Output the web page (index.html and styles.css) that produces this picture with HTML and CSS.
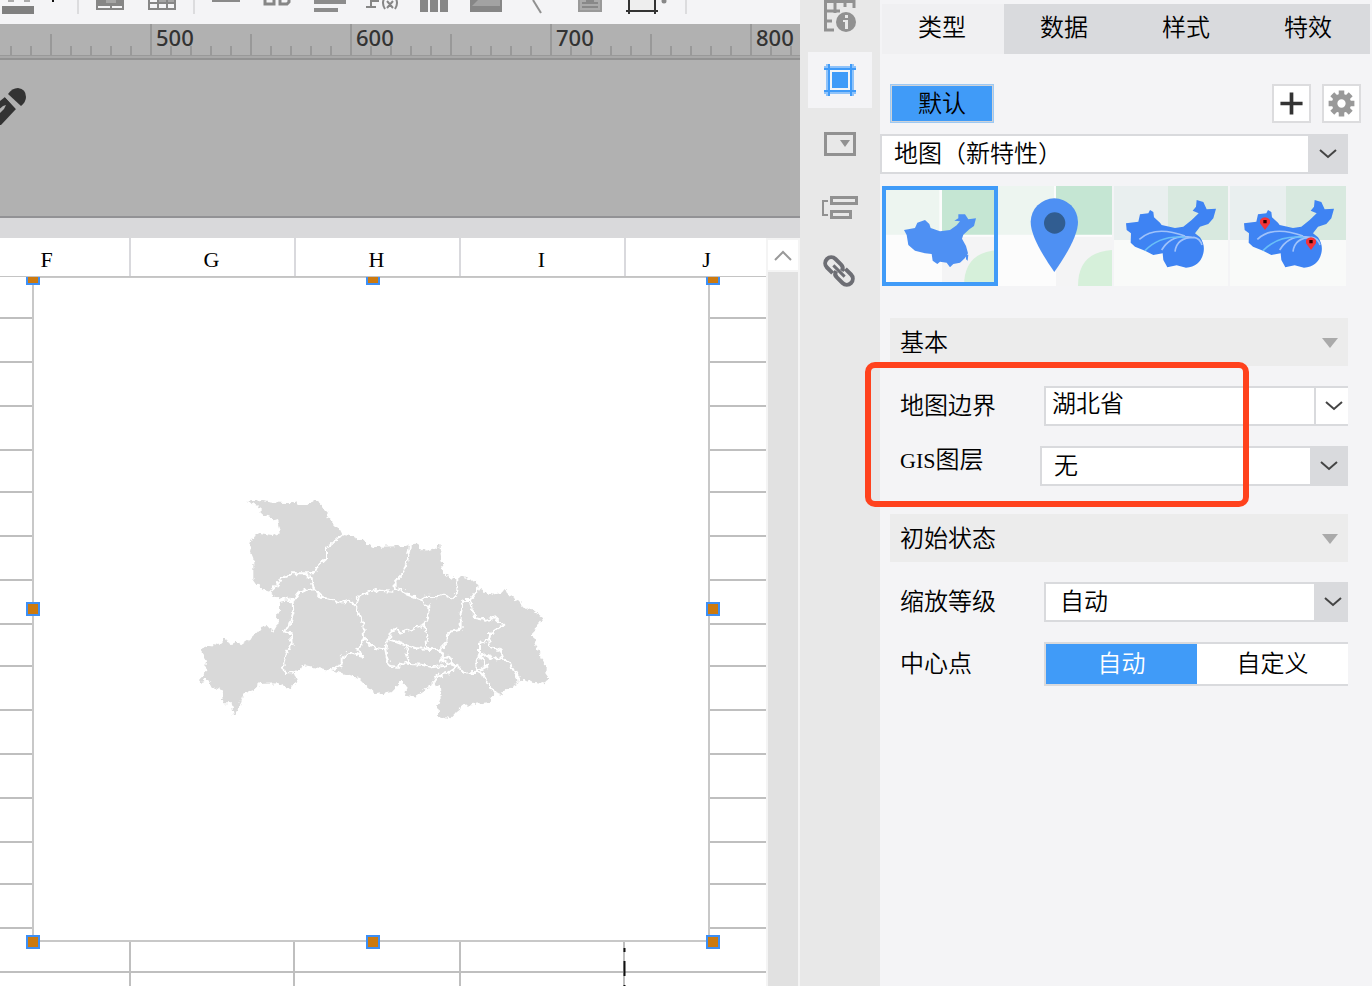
FILE: index.html
```html
<!DOCTYPE html>
<html lang="zh-CN">
<head>
<meta charset="utf-8">
<title>地图设计器</title>
<link rel="stylesheet" href="styles.css">
</head>
<body>
<div class="app">
  <main class="workspace">
    <div class="toolbar" role="toolbar" aria-label="工具栏">
      <button class="tool tool-first" aria-label="颜色"><svg viewBox="0 0 77 24"><path d="M2 6h32v8H2z" fill="#808080"/><path d="M8 0h6v2H8zM24 0h6v2h-6z" fill="#aaa"/><path d="M52 0h2v2h-2z" fill="#111"/></svg></button>
      <span class="divider"></span>
      <button class="tool" aria-label="合并单元格"><svg viewBox="84 0 52 24"><path d="M96 0h28v10H96z" fill="#868686"/><path d="M98 6h12v2H98zM112 6h10v2h-10z" fill="#f4f4f6"/><path d="M106 0h10v3h-10z" fill="#a5a5a5"/></svg></button>
      <button class="tool" aria-label="拆分单元格"><svg viewBox="136 0 52 24"><path d="M148 0h28v10h-28z" fill="#868686"/><path d="M150 4h7v4h-7zM159 4h7v4h-7zM168 4h6v4h-6zM150 0h7v2h-7z" fill="#f4f4f6"/><path d="M159 0h7v2h-7zM168 0h6v2h-6z" fill="#a5a5a5"/></svg></button>
      <span class="divider"></span>
      <button class="tool" aria-label="线条"><svg viewBox="200 0 52 24"><path d="M212 0h28v2h-28z" fill="#8a8a8a"/></svg></button>
      <button class="tool" aria-label="文本"><svg viewBox="252 0 52 24"><path d="M265 0v4h9V0M280 0v4h7l2-2V0" fill="none" stroke="#868686" stroke-width="3"/></svg></button>
      <button class="tool" aria-label="富文本"><svg viewBox="304 0 52 24"><path d="M314 0h32v4h-32zM314 8h24v4h-24z" fill="#8c8c8c"/></svg></button>
      <button class="tool" aria-label="公式"><svg viewBox="356 0 52 24"><path d="M366 7h10M371 7V-3M371 1h7V-1M385-3q-4 6 0 12M387 1l6 7M393 1l-6 7M395-3q4 6 0 12" fill="none" stroke="#868686" stroke-width="2"/></svg></button>
      <button class="tool" aria-label="图表"><svg viewBox="408 0 52 24"><path d="M420 0h8v12h-8zM430 0h8v12h-8zM440 0h8v12h-8z" fill="#868686"/></svg></button>
      <button class="tool" aria-label="图片"><svg viewBox="460 0 52 24"><path d="M470 0h32v12h-32z" fill="#868686"/><path d="M472 6l6-6h22v6z" fill="#a2a2a2"/></svg></button>
      <button class="tool" aria-label="斜线"><svg viewBox="512 0 52 24"><path d="M533 0l8 13" fill="none" stroke="#909090" stroke-width="2"/></svg></button>
      <button class="tool" aria-label="子报表"><svg viewBox="564 0 52 24"><path d="M578 0h24v12h-24z" fill="#999"/><path d="M580 0h20v10h-20z" fill="#aaa"/><path d="M582 3h16M582 7h16" stroke="#888" stroke-width="2"/><path d="M586 0h8v3h-8z" fill="#888"/></svg></button>
      <button class="tool" aria-label="悬浮元素"><svg viewBox="616 0 52 24"><path d="M630 0h24v10h-24z" fill="#eee"/><path d="M629 0v14M655 0v14M626 11h32" fill="none" stroke="#333" stroke-width="2"/><circle cx="664" cy="1" r="2.5" fill="#888"/></svg></button>
      <span class="divider divider-last"></span>
    </div>

    <div class="ruler">
      <div class="ruler-part"></div>
      <div class="ruler-part">500</div>
      <div class="ruler-part">600</div>
      <div class="ruler-part">700</div>
      <div class="ruler-part">800</div>
    </div>

    <div class="param-pane">
      <svg class="pencil" viewBox="0 0 30 40" aria-hidden="true"><path d="M-4 14L5 7l11 12L1 35h-5z" fill="#333"/><path d="M-4 27l8-8 2-4-3 1-7 6z" fill="#b1b1b1"/><path d="M6 6l13 14" stroke="#b1b1b1" stroke-width="3"/><path d="M8 4q4-6 10-6 8 1 8 9 0 5-5 9z" fill="#333"/></svg>
    </div>
    <div class="band"></div>

    <div class="sheet">
      <div class="sheet-main">
        <div class="columns"><span>F</span><span>G</span><span>H</span><span>I</span><span>J</span></div>
        <div class="canvas">
          <svg class="gridlines" width="2000" height="1400" aria-hidden="true">
            <path d="M0 41h2000M0 85h2000M0 129h2000M0 173h2000M0 215h2000M0 259h2000M0 303h2000M0 347h2000M0 389h2000M0 433h2000M0 477h2000M0 521h2000M0 565h2000M0 607h2000M0 651h2000M0 695h2000" stroke="#bfbfbf" stroke-width="2"/>
            <path d="M130 0v1400M294 0v1400M460 0v1400M624 0v1400" stroke="#bfbfbf" stroke-width="2"/>
            <path d="M624.500 671v4M624.500 684v15M624.500 708v15" stroke="#111" stroke-width="2"/>
          </svg>
          <div class="chart">
            <svg class="province" viewBox="0 0 1140 720" role="img" aria-label="湖北省">
              <defs><filter id="coast" x="0" y="0" width="1" height="1" color-interpolation-filters="sRGB"><feTurbulence type="fractalNoise" baseFrequency="0.07" numOctaves="2" seed="4"/><feDisplacementMap in="SourceGraphic" scale="20" xChannelSelector="R" yChannelSelector="G"/></filter></defs>
              <g filter="url(#coast)">
                <path fill="#d9d9d9" d="M170 36L215 30 270 38 308 40 318 32 328 48 352 44 375 30 392 42 408 66 415 86 445 115 455 135 480 137 520 155 550 172 570 170 645 168 680 164 705 184 735 174 748 164 754 210 760 250 795 270 808 256 860 276 868 296 905 314 935 308 945 296 953 314 985 334 1010 360 1020 355 1040 370 1060 385 1040 410 1028 434 1042 470 1052 500 1068 520 1066 550 1078 566 1055 582 1030 578 985 566 985 580 940 604 938 616 915 608 900 636 870 640 825 644 800 664 778 688 745 678 742 650 752 620 750 592 730 582 670 622 645 618 650 585 635 572 605 604 560 612 525 585 505 565 480 555 420 540 345 526 310 545 322 578 290 596 265 580 210 582 190 600 160 612 150 648 132 676 125 640 100 640 95 600 65 590 50 560 35 582 27 570 45 550 48 510 27 478 60 465 85 468 107 445 118 465 145 458 150 468 190 440 215 410 235 408 250 425 262 405 265 372 270 330 240 306 212 296 190 265 190 205 178 175 185 145 205 132 250 138 270 130 262 95 240 80 215 74 215 52Z"/>
                <g fill="none" stroke="#fff" stroke-width="6" stroke-linejoin="round">
                  <path d="M458 132L430 158 408 175 408 205 380 232 375 250 345 250 310 250 275 265 262 285 238 308"/>
                  <path d="M345 250L365 270 372 298 345 300 325 310 308 335 290 325 268 330"/>
                  <path d="M372 298L390 318 430 330 450 338 480 332 500 350 508 375 520 400 522 440 505 480 520 500 475 488 455 505 455 525 418 542"/>
                  <path d="M308 335L310 370 300 400 285 425 303 430 305 460 290 485 280 520 285 550 300 550 312 545"/>
                  <path d="M495 345L505 320 530 310 555 300 580 303 613 305M660 164L652 215 640 248 613 275 615 300 630 298 650 312 692 328 705 320 740 322 760 314 785 325 802 308 802 258"/>
                  <path d="M692 328L715 350 715 380 702 402 665 418 630 430 620 415 602 425 600 448 590 458 586 478 560 475 540 465 522 440"/>
                  <path d="M586 478L590 500 600 528 622 530 635 520 700 525 725 532 760 528 795 520"/>
                  <path d="M600 448L640 462 680 475 720 477 750 478 772 455 775 425 812 420 812 370 820 330 840 330 868 292"/>
                  <path d="M702 402L708 430 712 477M648 462L650 490 658 522"/>
                  <path d="M840 330L845 355 858 385 890 392 915 382 940 405 900 430 898 450 870 458 870 490 858 520 862 545"/>
                  <path d="M898 450L900 475 930 480 940 505 920 508 890 495 870 500 890 530 862 545M940 505L960 520 975 545 988 568"/>
                  <path d="M750 478L760 500 750 512 775 500 785 515 805 530 820 548 862 545 885 560 900 590 918 612M755 512L800 530 770 550 740 560 726 584"/>
                </g>
              </g>
            </svg>
            <i class="handle nw"></i><i class="handle n"></i><i class="handle ne"></i><i class="handle w"></i><i class="handle e"></i><i class="handle sw"></i><i class="handle s"></i><i class="handle se"></i>
          </div>
        </div>
      </div>
      <div class="scrollbar"><button class="scroll-up" aria-label="向上滚动"><svg viewBox="0 0 30 30"><path d="M7 20l8-8 8 8" fill="none" stroke="#999" stroke-width="2"/></svg></button></div>
    </div>
  </main>

  <nav class="rail" aria-label="属性面板">
    <button class="rail-item" aria-label="单元格属性"><svg viewBox="0 0 40 40"><g fill="none" stroke="#919191" stroke-width="3"><path d="M5.500 4v30H14M4 5.500h30V12M5 15h15M5 25h7M15 5v12M25 5v6" /></g><circle cx="26" cy="26" r="10" fill="#919191"/><path d="M25 19h3v3h-3zM23 24h5v9h-3v-7h-2z" fill="#e8e8e8"/></svg></button>
    <button class="rail-item active" aria-label="悬浮元素"><svg viewBox="0 0 40 40"><g fill="none" stroke="#8fc3fa" stroke-width="4"><path d="M4 8h32M4 32h32M8 4v32M32 4v32"/></g><path d="M9 4v32M31 4v32M4 9h32M4 31h32" stroke="#409bf8" stroke-width="2"/><path d="M12 12h16v16H12z" fill="#409bf8"/></svg></button>
    <button class="rail-item" aria-label="控件设置"><svg viewBox="0 0 40 40"><path d="M5.500 9.500h29v21h-29z" fill="none" stroke="#919191" stroke-width="3"/><path d="M20 16h10l-5 7z" fill="#919191"/></svg></button>
    <button class="rail-item" aria-label="条件属性"><svg viewBox="0 0 40 40"><g fill="none" stroke="#919191" stroke-width="3"><path d="M11.500 9.500h25v6h-25zM11.500 23.500h19v6h-19z"/><path d="M8 13H3v14h5" stroke-width="2"/></g></svg></button>
    <button class="rail-item" aria-label="超级链接"><svg viewBox="0 0 40 40"><g fill="none" stroke="#6d6e74" stroke-width="4" transform="translate(19 19) rotate(45)"><path d="M-3 6h-8a5 5 0 0 1 0-12h8a5 5 0 0 1 5 4M3-6h8a5 5 0 0 1 0 12H3a5 5 0 0 1-5-4"/><path d="M-8 0H8" stroke-width="3"/></g></svg></button>
  </nav>

  <aside class="panel">
    <div class="tabs" role="tablist">
      <button class="tab current" role="tab" aria-selected="true">类型</button>
      <button class="tab" role="tab">数据</button>
      <button class="tab" role="tab">样式</button>
      <button class="tab" role="tab">特效</button>
    </div>
    <div class="actions">
      <button class="default-button">默认</button>
      <button class="icon-button" aria-label="添加"><svg viewBox="0 0 38 38"><path d="M19 7v24M7 19h24" stroke="#333" stroke-width="4"/></svg></button>
      <button class="icon-button" aria-label="设置"><svg viewBox="0 0 38 38"><g stroke="#999" stroke-width="6"><path d="M19 5v28M5 19h28M9 9l20 20M29 9L9 29"/></g><circle cx="19" cy="19" r="7.500" fill="#fff" stroke="#999" stroke-width="6"/></svg></button>
    </div>
    <div class="select-box type-select">
      <select aria-label="图表类型"><option>地图（新特性）</option></select>
      <span class="arrow"><svg viewBox="0 0 18 12"><path d="M1 2l8 7 8-7" fill="none" stroke="#444" stroke-width="2"/></svg></span>
    </div>
    <div class="thumbs">
      <button class="thumb chosen" aria-label="区域地图"><svg viewBox="246 558 348 300" preserveAspectRatio="none"><path fill="#fcfcfc" d="M246 558h348v300H246z"/><path fill="#edf5f0" d="M246 558h172v146H246z"/><path fill="#c5e6d3" d="M426 558h168v146H426z"/><path fill="#f4f4f5" d="M426 710h168v148H426z"/><path fill="#d6f0da" d="M492 858q0-102 102-108v108z"/><path fill="#4e90f3" d="M312 690L345 684 352 668 375 660 388 672 392 684 420 694 450 690 470 676 480 664 463 662 475 655 475 643 495 643 505 658 528 655 522 678 508 688 490 704 486 716 498 738 504 760 495 774 480 788 460 792 450 802 440 788 420 785 412 792 398 782 395 762 375 760 345 752 325 735 320 705Z"/><path fill="#4e90f3" d="M498 764h7l-2 18-5-4z"/></svg></button>
      <button class="thumb" aria-label="点地图"><svg viewBox="594 558 342 300" preserveAspectRatio="none"><path fill="#fcfcfc" d="M594 558h342v300H594z"/><path fill="#edf5f0" d="M594 558h168v146H594z"/><path fill="#c5e6d3" d="M768 558h168v146H768z"/><path fill="#f4f4f5" d="M768 710h168v148H768z"/><path fill="#d6f0da" d="M834 858q0-102 102-108v108z"/><path fill="#4e90f3" d="M763 816Q692 715 692 666a71 71 0 0 1 142 0Q834 715 763 816z"/><circle cx="764" cy="669" r="32" fill="#315d91"/></svg></button>
      <button class="thumb" aria-label="流向地图"><svg viewBox="102 558 342 300" preserveAspectRatio="none"><path fill="#f9faf9" d="M102 558h342v300H102z"/><path fill="#e9efef" d="M102 558h162v162H102z"/><path fill="#d8e9df" d="M264 558h180v162H264z"/><g id="flow"><path fill="#3e83f3" d="M138 670L175 665 180 643 205 640 210 630 220 636 222 652 240 668 245 675 285 684 310 680 335 660 356 640 338 632 348 620 350 600 370 606 380 628 408 626 400 655 385 672 360 680 345 700 360 712Q376 735 370 760 360 800 318 803L290 796 262 802 250 780 248 760 220 765 195 752 165 740 152 728 153 700 140 690Z"/><g fill="none" stroke="#9fc2fa" stroke-width="5"><path d="M178 718Q225 675 315 708M245 750Q275 700 335 712M285 755Q290 712 342 712 360 715 366 735"/><path d="M195 752Q240 705 315 712" stroke="#69bff7"/></g></g></svg></button>
      <button class="thumb" aria-label="自定义地图"><svg viewBox="450 558 348 300" preserveAspectRatio="none"><path fill="#f9faf9" d="M450 558h348v300H450z"/><path fill="#e9efef" d="M450 558h168v162H450z"/><path fill="#d8e9df" d="M618 558h180v162H618z"/><use href="#flow" x="354"/><g fill="#f5343a"><path d="M555 690l-15-20v-10q5-8 15-8t15 8v10zM693 750l-15-20v-10q5-8 15-8t15 8v10z"/><path fill="#300" d="M550 660h10v10h-10zM688 720h10v10h-10z"/></g></svg></button>
    </div>

    <section class="group">
      <h2 class="group-title">基本<svg viewBox="0 0 16 10"><path d="M0 0h16L8 10z" fill="#aaa"/></svg></h2>
      <div class="field">
        <label for="border">地图边界</label>
        <div class="combo"><input id="border" type="text" value="湖北省"><button class="arrow plain" aria-label="选择边界"><svg viewBox="0 0 18 12"><path d="M1 2l8 7 8-7" fill="none" stroke="#444" stroke-width="2"/></svg></button></div>
      </div>
      <div class="field gis">
        <label for="layer"><span class="latin">GIS</span>图层</label>
        <div class="select-box"><select id="layer"><option>无</option></select><span class="arrow medium"><svg viewBox="0 0 18 12"><path d="M1 2l8 7 8-7" fill="none" stroke="#444" stroke-width="2"/></svg></span></div>
      </div>
      <div class="highlight"></div>
    </section>

    <section class="group second">
      <h2 class="group-title">初始状态<svg viewBox="0 0 16 10"><path d="M0 0h16L8 10z" fill="#aaa"/></svg></h2>
      <div class="field">
        <label for="zoom">缩放等级</label>
        <div class="select-box"><select id="zoom"><option>自动</option></select><span class="arrow narrow"><svg viewBox="0 0 18 12"><path d="M1 2l8 7 8-7" fill="none" stroke="#444" stroke-width="2"/></svg></span></div>
      </div>
      <div class="field">
        <span class="label" id="center">中心点</span>
        <div class="segmented" role="group" aria-labelledby="center"><button class="on">自动</button><button>自定义</button></div>
      </div>
    </section>
  </aside>
</div>
</body>
</html>
```

FILE: styles.css
```css
* { box-sizing: border-box; }
body {
  margin: 0;
  background: #f4f4f6;
  color: #000;
  font: 350 24px/32px "Liberation Serif", "Noto Sans CJK SC", serif;
}
button, input, select {
  margin: 0;
  padding: 0;
  border: 0;
  border-radius: 0;
  background: none;
  color: inherit;
  font: inherit;
}
svg { display: block; }
.app {
  display: grid;
  grid-template-columns: minmax(0, 1fr) 80px 492px;
  height: 100vh;
  overflow: hidden;
}
.workspace { display: flex; flex-direction: column; min-height: 0; }

.toolbar { display: flex; flex: none; height: 24px; overflow: hidden; }
.tool { flex: none; width: 52px; height: 24px; overflow: hidden; }
.tool svg { width: 100%; height: 24px; overflow: visible; }
.tool-first { width: 77px; }
.divider { flex: none; width: 2px; height: 14px; margin: 0 5px; background: #dcdcde; }
.tool-first + .divider { margin: 0 5px 0 0; }
.divider-last { margin-left: 17px; }

.ruler {
  display: flex;
  flex: none;
  height: 36px;
  overflow: hidden;
  border-bottom: 2px solid #929292;
  background: #b1b1b1;
  box-shadow: inset 0 -2px #a8a8a8;
}
.ruler-part {
  flex: none;
  width: 200px;
  height: 32px;
  padding-left: 6px;
  border-bottom: 1px solid #999;
  background:
    linear-gradient(#999, #999) 0 0 / 2px 32px no-repeat,
    linear-gradient(#999, #999) 100px 10px / 2px 22px no-repeat,
    repeating-linear-gradient(90deg, #999 0 2px, transparent 2px 20px) 0 22px / 200px 10px no-repeat;
  color: #333;
  font: 500 22px/26px "Noto Sans", sans-serif;
}
.ruler-part:first-child { margin-left: -50px; }
.param-pane { flex: none; height: 158px; padding-top: 30px; border-bottom: 2px solid #929295; background: #b1b1b1; }
.pencil { width: 30px; height: 40px; overflow: visible; }
.band { flex: none; height: 20px; background: #d9d9db; }

.sheet { display: flex; flex: 1; min-height: 0; }
.sheet-main { display: flex; flex: 1; flex-direction: column; min-width: 0; background: #fff; }
.columns { display: flex; flex: none; height: 39px; overflow: hidden; border-bottom: 1px solid #c4c4c4; }
.columns span {
  flex: none;
  width: 165px;
  padding-right: 2px;
  border-right: 2px solid #d9d9dd;
  font-size: 22px;
  line-height: 44px;
  text-align: center;
}
.columns span:first-child { margin-left: -34px; }
.canvas { position: relative; flex: 1; overflow: hidden; }
.gridlines { position: absolute; top: 0; left: 0; }
.chart {
  position: absolute;
  top: -1px;
  left: 32px;
  width: 678px;
  height: 666px;
  border: 2px solid #c8c8c8;
  background: #fff;
}
.province { position: absolute; top: 212px; left: 156px; width: 380px; height: 240px; }
.handle { position: absolute; width: 14px; height: 14px; border: 2px solid #3d8ff5; background: #cc7a10; }
.nw, .n, .ne { top: -7px; }
.w, .e { top: 324px; }
.sw, .s, .se { bottom: -9px; }
.nw, .w, .sw { left: -8px; }
.n, .s { left: 332px; }
.ne, .e, .se { right: -12px; }

.scrollbar { flex: none; width: 34px; padding-top: 2px; border: solid #f4f4f4; border-width: 0 2px; background: linear-gradient(#f4f4f4 34px, #e1e1e1 34px); }
.scroll-up { display: block; width: 30px; height: 30px; background: #fff; }

.rail { display: flex; flex-direction: column; gap: 8px; padding: 0 8px; background: #e8e8e8; }
.rail-item { display: flex; flex: none; align-items: center; justify-content: center; height: 56px; }
.rail-item:first-child { height: 44px; padding-bottom: 12px; }
.rail-item svg { flex: none; width: 40px; height: 40px; }
.rail-item.active { background: #f4f4f6; }

.panel { padding: 4px 24px 0 0; }
.tabs { display: flex; margin: 0 -22px 0 2px; }
.tab { flex: 1; height: 50px; padding: 0 2px 2px 0; background: #d9dadd; }
.tab.current { background: #f0f0f2; }
.actions { display: flex; gap: 11px; margin: 30px -13px 11px 10px; }
.default-button { width: 104px; height: 39px; margin-right: auto; border: 2px solid #cfd3d8; background: #409bf8; line-height: 34px; outline: 1px solid #9cc9f5; outline-offset: -1px; }
.icon-button { width: 39px; height: 39px; border: 2px solid #dcdcde; background: #fff; }
.icon-button svg { width: 100%; }

.select-box, .combo { display: flex; flex: 1; min-width: 0; height: 40px; border: 2px solid #d9dadd; border-right: 0; background: #fff; }
.type-select { margin-bottom: 12px; }
select { flex: 1; min-width: 0; padding-left: 12px; appearance: none; }
.combo input { flex: 1; min-width: 0; padding: 0 0 4px 6px; outline: 0; }
.arrow { display: flex; flex: none; align-items: center; justify-content: center; width: 40px; margin: -2px 0; background: #d9dadd; pointer-events: none; }
.arrow svg { flex: none; width: 18px; height: 12px; }
.arrow.plain, .arrow.narrow { width: 34px; padding-left: 4px; }
.arrow.plain { margin: 0; border-left: 2px solid #d9dadd; background: #fff; pointer-events: auto; }
.arrow.medium { width: 38px; }

.thumbs { display: grid; grid-template-columns: repeat(4, 1fr); height: 100px; margin: 0 2px 32px; }
.thumb:nth-child(2), .thumb:nth-child(3) { padding-right: 2px; }
.thumb svg { width: 100%; height: 100px; }
.chosen { outline: 4px solid #409bf8; outline-offset: -4px; }

.group { position: relative; padding-left: 20px; }
.group.second { margin-top: 28px; }
.group-title {
  display: flex;
  align-items: center;
  justify-content: space-between;
  height: 48px;
  margin: 0 0 20px -10px;
  padding: 2px 10px 0;
  background: #ececec;
  font-size: 24px;
  font-weight: 350;
}
.group-title svg { width: 16px; height: 10px; }
.field { display: flex; align-items: center; }
.field + .field { margin-top: 20px; }
.field label, .label { flex: none; width: 144px; }
.gis label { align-self: flex-start; width: 140px; line-height: 28px; }
.latin { font-size: 22px; }
.second select { padding-left: 14px; }
.segmented { display: flex; flex: 1; height: 44px; border: 2px solid #d9dadd; border-right: 0; background: #fff; }
.segmented button { flex: 1; }
.segmented .on { background: #409bf8; color: #fff; }
.highlight {
  position: absolute;
  top: 44px;
  left: -15px;
  width: 384px;
  height: 145px;
  border: 6px solid #ff421d;
  border-radius: 10px;
  pointer-events: none;
}
```
